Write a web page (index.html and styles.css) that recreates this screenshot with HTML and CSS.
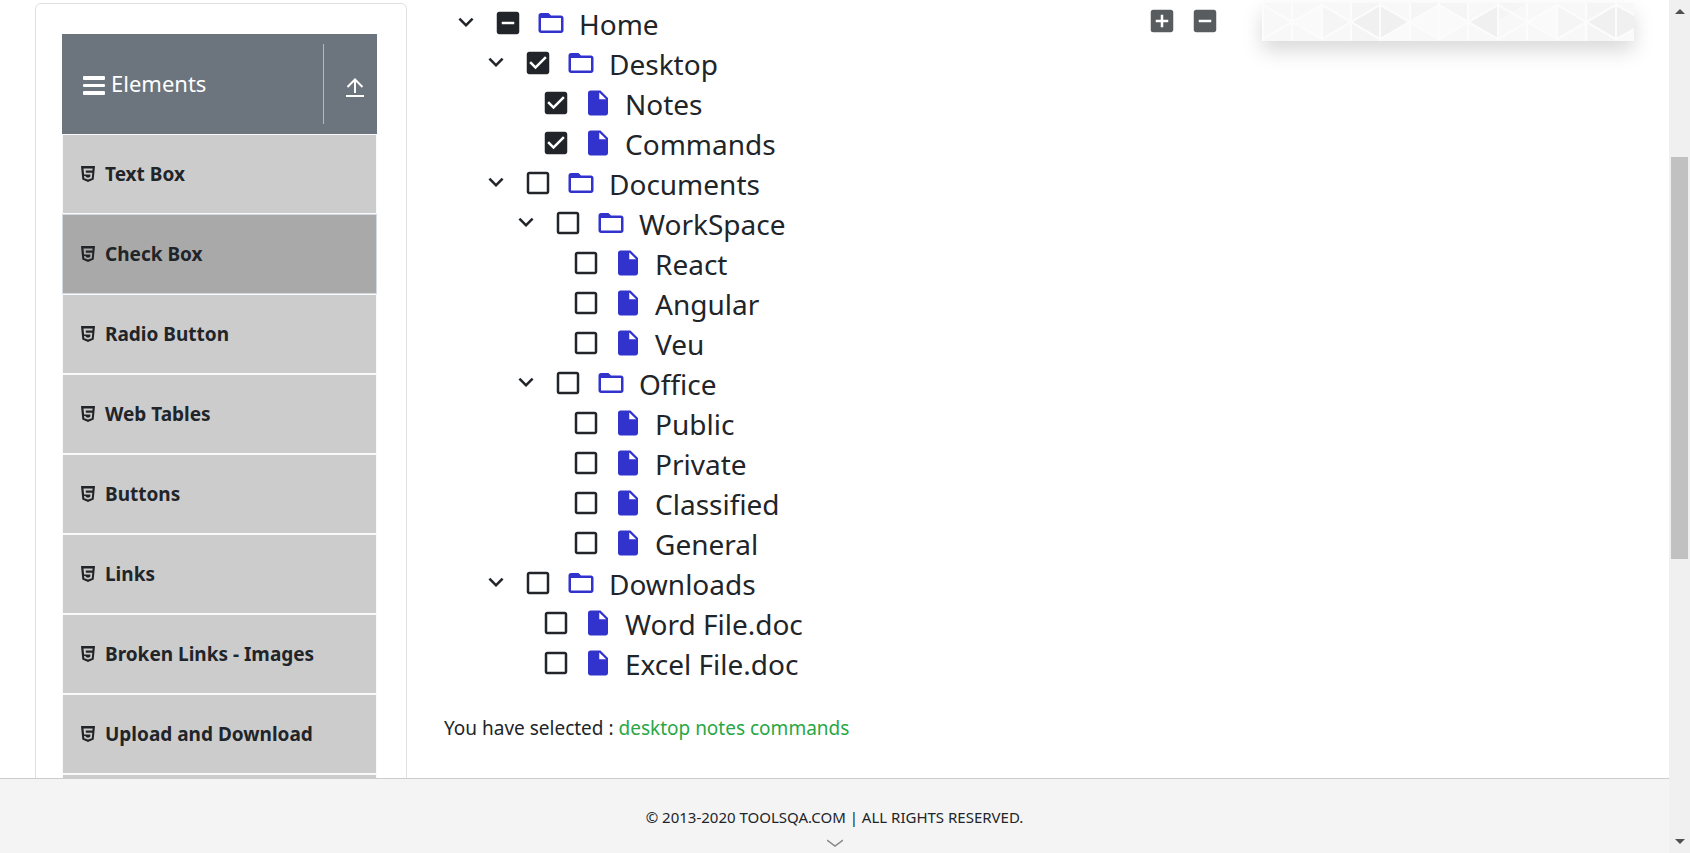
FILE: index.html
```
<!DOCTYPE html>
<html lang="en">
<head>
<meta charset="utf-8">
<title>Check Box</title>
<link rel="stylesheet" href="styles.css">
</head>
<body>
<svg class="sprite" aria-hidden="true">
  <symbol id="down" viewBox="0 0 24 24"><path d="M7.41 7.84 12 12.42l4.59-4.58L18 9.25l-6 6-6-6z"/></symbol>
  <symbol id="off" viewBox="0 0 24 24"><path d="M19 5v14H5V5h14m0-2H5c-1.1 0-2 .9-2 2v14c0 1.1.9 2 2 2h14c1.1 0 2-.9 2-2V5c0-1.1-.9-2-2-2z"/></symbol>
  <symbol id="on" viewBox="0 0 24 24"><path d="M19 3H5c-1.11 0-2 .9-2 2v14c0 1.1.89 2 2 2h14c1.11 0 2-.9 2-2V5c0-1.1-.89-2-2-2zm-9 14l-5-5 1.41-1.41L10 14.17l7.59-7.59L19 8l-9 9z"/></symbol>
  <symbol id="half" viewBox="0 0 24 24"><path d="M19 3H5c-1.1 0-2 .9-2 2v14c0 1.1.9 2 2 2h14c1.1 0 2-.9 2-2V5c0-1.1-.9-2-2-2zm-2 10H7v-2h10v2z"/></symbol>
  <symbol id="plus" viewBox="0 0 24 24"><path d="M19 3H5a2 2 0 0 0-2 2v14a2 2 0 0 0 2 2h14c1.1 0 2-.9 2-2V5c0-1.1-.9-2-2-2zm-2 10h-4v4h-2v-4H7v-2h4V7h2v4h4v2z"/></symbol>
  <symbol id="folder" viewBox="0 0 24 24"><path d="M20 6h-8l-2-2H4c-1.1 0-1.99.9-1.99 2L2 18c0 1.1.9 2 2 2h16c1.1 0 2-.9 2-2V8c0-1.1-.9-2-2-2zm0 12H4V8h16v10z"/></symbol>
  <symbol id="file" viewBox="0 0 24 24"><path d="M6 2c-1.1 0-1.99.9-1.99 2L4 20c0 1.1.89 2 1.99 2H18c1.1 0 2-.9 2-2V8l-6-6H6zm7 7V3.500L18.500 9H13z"/></symbol>
  <symbol id="html5" viewBox="0 0 14 16"><path fill-rule="evenodd" d="M0 0h14l-1.300 13.400L7 16l-5.700-2.600zM2.500 2.600l.6 5.900h6.300l-.2 2.600-2.200.7-2.200-.7-.1-1.100H3.100l.2 2.300L7 13.500l3.800-1.200.5-5.500H4.900l-.2-2.400h6.700l.2-1.800z"/></symbol>
</svg>
<div class="screen">
  <main class="content">
    <nav class="sidebar" aria-label="Elements">
      <div class="group-head">
        <svg class="bars" viewBox="0 0 22 20" aria-hidden="true"><path d="M1 0h20a1 1 0 0 1 1 1v2a1 1 0 0 1-1 1H1a1 1 0 0 1-1-1V1a1 1 0 0 1 1-1zM1 8h20a1 1 0 0 1 1 1v1a1 1 0 0 1-1 1H1a1 1 0 0 1-1-1V9a1 1 0 0 1 1-1zM1 15h20a1 1 0 0 1 1 1v2a1 1 0 0 1-1 1H1a1 1 0 0 1-1-1v-2a1 1 0 0 1 1-1z"/></svg>
        <span class="group-title">Elements</span>
        <button class="group-toggle" aria-label="Collapse group"><svg viewBox="0 0 18 20"><path d="M9 15V1.500M1.500 9 9 1.500 16.500 9" fill="none" stroke="#fff" stroke-width="2"/><path d="M0 17h18v2H0z" fill="#fff"/></svg></button>
      </div>
      <ul class="menu">
        <li class="item"><svg><use href="#html5"/></svg>Text Box</li>
        <li class="item active"><svg><use href="#html5"/></svg>Check Box</li>
        <li class="item"><svg><use href="#html5"/></svg>Radio Button</li>
        <li class="item"><svg><use href="#html5"/></svg>Web Tables</li>
        <li class="item"><svg><use href="#html5"/></svg>Buttons</li>
        <li class="item"><svg><use href="#html5"/></svg>Links</li>
        <li class="item"><svg><use href="#html5"/></svg>Broken Links - Images</li>
        <li class="item"><svg><use href="#html5"/></svg>Upload and Download</li>
        <li class="item"></li>
      </ul>
    </nav>

    <section class="panel">
      <div class="tree-wrap">
        <ol class="tree">
          <li>
            <div class="row"><button class="toggle" aria-label="Toggle"><svg><use href="#down"/></svg></button><label><span class="tick"><input type="checkbox"><svg><use href="#half"/></svg></span><svg class="blue"><use href="#folder"/></svg><span class="name">Home</span></label></div>
            <ol>
              <li>
                <div class="row"><button class="toggle" aria-label="Toggle"><svg><use href="#down"/></svg></button><label><span class="tick"><input type="checkbox" checked><svg><use href="#on"/></svg></span><svg class="blue"><use href="#folder"/></svg><span class="name">Desktop</span></label></div>
                <ol>
                  <li class="row leaf"><label><span class="tick"><input type="checkbox" checked><svg><use href="#on"/></svg></span><svg class="blue"><use href="#file"/></svg><span class="name">Notes</span></label></li>
                  <li class="row leaf"><label><span class="tick"><input type="checkbox" checked><svg><use href="#on"/></svg></span><svg class="blue"><use href="#file"/></svg><span class="name">Commands</span></label></li>
                </ol>
              </li>
              <li>
                <div class="row"><button class="toggle" aria-label="Toggle"><svg><use href="#down"/></svg></button><label><span class="tick"><input type="checkbox"><svg><use href="#off"/></svg></span><svg class="blue"><use href="#folder"/></svg><span class="name">Documents</span></label></div>
                <ol>
                  <li>
                    <div class="row"><button class="toggle" aria-label="Toggle"><svg><use href="#down"/></svg></button><label><span class="tick"><input type="checkbox"><svg><use href="#off"/></svg></span><svg class="blue"><use href="#folder"/></svg><span class="name">WorkSpace</span></label></div>
                    <ol>
                      <li class="row leaf"><label><span class="tick"><input type="checkbox"><svg><use href="#off"/></svg></span><svg class="blue"><use href="#file"/></svg><span class="name">React</span></label></li>
                      <li class="row leaf"><label><span class="tick"><input type="checkbox"><svg><use href="#off"/></svg></span><svg class="blue"><use href="#file"/></svg><span class="name">Angular</span></label></li>
                      <li class="row leaf"><label><span class="tick"><input type="checkbox"><svg><use href="#off"/></svg></span><svg class="blue"><use href="#file"/></svg><span class="name">Veu</span></label></li>
                    </ol>
                  </li>
                  <li>
                    <div class="row"><button class="toggle" aria-label="Toggle"><svg><use href="#down"/></svg></button><label><span class="tick"><input type="checkbox"><svg><use href="#off"/></svg></span><svg class="blue"><use href="#folder"/></svg><span class="name">Office</span></label></div>
                    <ol>
                      <li class="row leaf"><label><span class="tick"><input type="checkbox"><svg><use href="#off"/></svg></span><svg class="blue"><use href="#file"/></svg><span class="name">Public</span></label></li>
                      <li class="row leaf"><label><span class="tick"><input type="checkbox"><svg><use href="#off"/></svg></span><svg class="blue"><use href="#file"/></svg><span class="name">Private</span></label></li>
                      <li class="row leaf"><label><span class="tick"><input type="checkbox"><svg><use href="#off"/></svg></span><svg class="blue"><use href="#file"/></svg><span class="name">Classified</span></label></li>
                      <li class="row leaf"><label><span class="tick"><input type="checkbox"><svg><use href="#off"/></svg></span><svg class="blue"><use href="#file"/></svg><span class="name">General</span></label></li>
                    </ol>
                  </li>
                </ol>
              </li>
              <li>
                <div class="row"><button class="toggle" aria-label="Toggle"><svg><use href="#down"/></svg></button><label><span class="tick"><input type="checkbox"><svg><use href="#off"/></svg></span><svg class="blue"><use href="#folder"/></svg><span class="name">Downloads</span></label></div>
                <ol>
                  <li class="row leaf"><label><span class="tick"><input type="checkbox"><svg><use href="#off"/></svg></span><svg class="blue"><use href="#file"/></svg><span class="name">Word File.doc</span></label></li>
                  <li class="row leaf"><label><span class="tick"><input type="checkbox"><svg><use href="#off"/></svg></span><svg class="blue"><use href="#file"/></svg><span class="name">Excel File.doc</span></label></li>
                </ol>
              </li>
            </ol>
          </li>
        </ol>
        <div class="tree-options">
          <button aria-label="Expand all"><svg><use href="#plus"/></svg></button>
          <button aria-label="Collapse all"><svg><use href="#half"/></svg></button>
        </div>
      </div>
      <p class="result">You have selected : <span class="picked">desktop</span> <span class="picked">notes</span> <span class="picked">commands</span></p>
    </section>

    <aside class="banner">
      <svg viewBox="0 0 372 38" preserveAspectRatio="none" aria-hidden="true">
        <path fill="#f8f8f8" d="M0 0h372v38H0z"/>
        <path fill="#f5f5f5" d="M89 0h29v2L89 18zM148 0h58v18L177 2l-29 16zM236 0h29l-29 18zM60 2l28 17-28 17zM295 2l28 17-28 17zM325 0h29l-29 18zM89 38V20l29 18zM325 38V20l29 18z"/>
        <path fill="#fafafa" d="M30 19 60 2v34zM148 19l29-17v34zM177 2l29 17-29 17zM265 19l30-17v34zM372 28v10h-18zM118 38l30-18v18z"/>
        <path fill="#f0f0f0" d="M89 19l29-17v34zM118 2l30 17-30 17zM206 19l29-17v34zM324 19l29-17v34zM354 2l18 10v14l-18 10z"/>
        <path stroke="#fcfcfc" stroke-width="2" fill="none" d="M1 0v38M30 0v38M60 0v38M89 0v38M118 0v38M148 0v38M177 0v38M206 0v38M236 0v38M265 0v38M295 0v38M324 0v38M354 0v38M1 2l59 34L118 2l59 34 59-34 59 34 59-34 18 10M1 36 60 2l58 34 59-34 59 34 59-34 59 34 18-10"/>
      </svg>
    </aside>
  </main>

  <footer class="footer">
    <span>© 2013-2020 TOOLSQA.COM | ALL RIGHTS RESERVED.</span>
    <svg class="more" viewBox="0 0 16 8" aria-hidden="true"><path d="M0 1l8 6 8-6" fill="none" stroke="#888" stroke-width="1.500"/></svg>
  </footer>

  <div class="scrollbar" aria-hidden="true">
    <svg class="arrow" viewBox="0 0 10 5"><path d="M5 0l5 5H0z"/></svg>
    <div class="track"><div class="thumb"></div></div>
    <svg class="arrow" viewBox="0 0 10 5"><path d="M5 5L0 0h10z"/></svg>
  </div>
</div>
</body>
</html>
```
FILE: styles.css
```
* { box-sizing: border-box; }

body {
  margin: 0;
  background: #fff;
  color: #212529;
  font-family: "Noto Sans", "Open Sans", sans-serif;
  font-size: 19px;
  line-height: 30px;
}

svg { display: block; fill: currentColor; }

button {
  padding: 0;
  border: 0;
  background: none;
  color: inherit;
}

ol, ul {
  margin: 0;
  padding: 0;
  list-style: none;
}

.sprite { display: none; }

.screen {
  display: grid;
  grid-template-columns: minmax(0, 1fr) 21px;
  grid-template-rows: minmax(0, 1fr) auto;
  height: 100vh;
  overflow: hidden;
}

.content {
  display: grid;
  grid-template-columns: 372fr 781fr 372fr;
  gap: 37px;
  align-items: start;
  padding: 3px 35px 0;
  overflow: hidden;
}

/* Sidebar */
.sidebar {
  padding: 30px 29px 30px 26px;
  border: 1px solid #dfdfdf;
  border-radius: 6px;
}

.group-head {
  display: flex;
  align-items: center;
  height: 100px;
  padding: 10px 0 10px 21px;
  background: #6c757d;
  color: #fff;
  font-size: 22px;
}

.bars {
  width: 22px;
  height: 20px;
  margin: 4px 6px 0 0;
}

.group-title {
  flex: 1;
  padding-bottom: 2px;
}

.group-toggle {
  display: grid;
  place-items: center;
  width: 54px;
  height: 80px;
  padding: 8px 0 0 9px;
  border-left: 1px solid #b4b8bc;
}

.group-toggle svg {
  width: 18px;
  height: 20px;
}

.item {
  display: flex;
  align-items: center;
  gap: 10px;
  height: 80px;
  padding-left: 18px;
  border: 1px solid #f8f9fa;
  background: #ccc;
  font-weight: 700;
}

.item svg {
  width: 14px;
  height: 16px;
}

.item.active {
  border-color: #d3d9df;
  background: #a9a9a9;
}

/* Tree */
.tree-wrap {
  display: flex;
  align-items: flex-start;
}

.tree { flex: 1; }

.tree ol { padding-left: 30px; }

.row, .row label {
  display: flex;
  align-items: center;
}

.row { height: 40px; }

.row label { gap: 13px; }

.row svg, .tree-options svg {
  width: 30px;
  height: 30px;
}

.toggle { padding: 0 12px 0 7px; }

.leaf { padding-left: 37px; }

.leaf label { gap: 12px; }

.blue { color: #3232cd; }

.tick { display: grid; }

.tick > * {
  grid-area: 1 / 1;
  margin: 0;
}

.tick input { opacity: 0; }

.name {
  padding-top: 2px;
  font-size: 28px;
  line-height: 38px;
}

.tree-options {
  display: flex;
  gap: 13px;
  padding: 3px 5px 0 0;
  color: #585c5f;
}

.result { margin: 30px 0 0; }

.picked { color: #28a745; }

.banner { box-shadow: 0 10px 20px rgba(0, 0, 0, 0.15); }

.banner svg {
  width: 100%;
  height: 38px;
}

/* Footer */
.footer {
  display: flex;
  flex-direction: column;
  align-items: center;
  gap: 7px;
  padding: 23px 0 6px;
  border-top: 1px solid #ccc;
  background: #f4f4f4;
  font-size: 15px;
}

.more {
  width: 16px;
  height: 8px;
}

/* Scrollbar */
.scrollbar {
  display: flex;
  flex-direction: column;
  align-items: center;
  grid-area: 1 / 2 / 3 / 3;
  padding: 9px 2px;
  background: #f0f0f0;
  color: #505050;
}

.arrow {
  width: 10px;
  height: 5px;
}

.track {
  flex: 1;
  align-self: stretch;
  padding-top: 143px;
}

.thumb {
  height: 59%;
  background: #c1c1c1;
}
```
